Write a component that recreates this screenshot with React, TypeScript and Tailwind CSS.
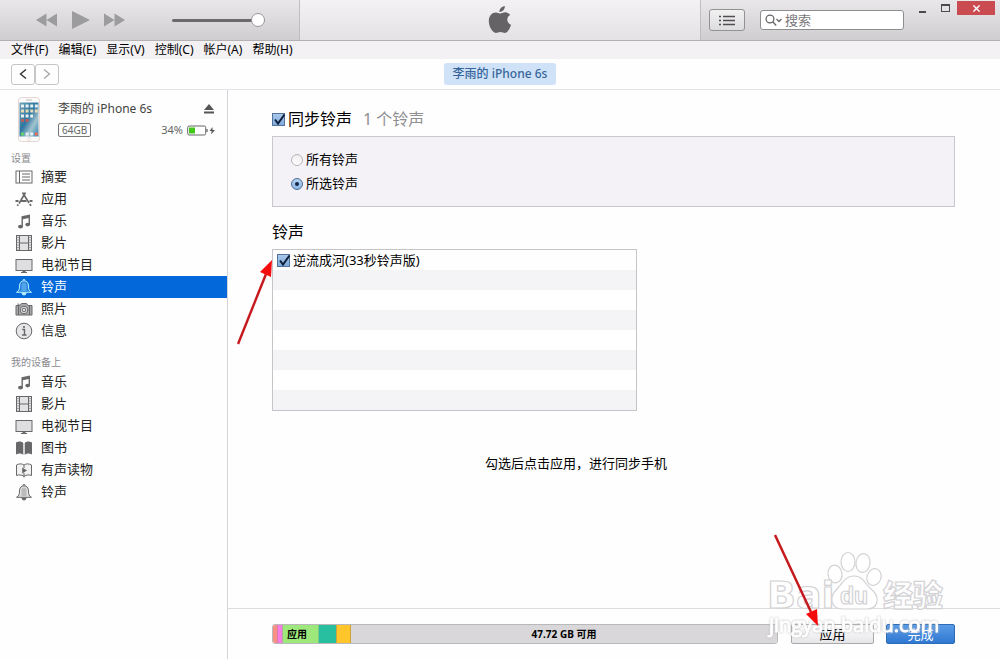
import type { ReactNode } from "react";

type IconName =
  | "summary"
  | "apps"
  | "music"
  | "film"
  | "tv"
  | "bell"
  | "camera"
  | "info"
  | "book"
  | "audiobook";

const icons: Record<IconName, ReactNode> = {
  summary: (
    <>
      <rect x="1" y="3" width="16" height="12" fill="#fff" />
      <path d="M4.5 3v12M7 6h8M7 9h8M7 12h8" />
    </>
  ),
  apps: (
    <>
      <path d="M7.500 2.500L14 13M10.500 2.500L4 13.500" strokeWidth="1.600" />
      <path d="M.5 11h3M6 11h5.500M14.500 11h3" strokeWidth="1.800" />
      <path d="M3.200 14.500l-.9 1.200M14.800 14l1.200 1.800" strokeWidth="1.800" />
    </>
  ),
  music: (
    <>
      <path d="M6.500 4.200L15 2.500v9.800h-1.400V6L7.900 7.200v7.300H6.500z" fill="currentColor" stroke="none" />
      <ellipse cx="5.500" cy="14.600" rx="2.500" ry="1.900" fill="currentColor" stroke="none" />
      <ellipse cx="12.700" cy="12.600" rx="2.400" ry="1.800" fill="currentColor" stroke="none" />
    </>
  ),
  film: (
    <>
      <rect x="1.500" y="1.500" width="15" height="15" fill="#e2e2e4" />
      <path d="M4.500 1.500v15M13.500 1.500v15M4.500 9h9" />
      <path d="M3 3v13M15 3v13" strokeDasharray="1 1.500" />
    </>
  ),
  tv: (
    <>
      <rect x="1" y="3.500" width="16" height="11" fill="#dedee0" />
      <path d="M6 16.500h6M7.500 15.500h3" />
    </>
  ),
  bell: (
    <>
      <path
        d="M1.500 14.300c2.500-1.300 3-2.800 3-6.300C4.500 4.800 6.300 2.800 9 2.800s4.500 2 4.500 5.200c0 3.500.5 5 3 6.300z"
        fill="currentColor"
        fillOpacity=".2"
      />
      <path d="M6.500 7c0-1.500 1-2.500 2.500-2.500S11.500 5.500 11.500 7v6h-5z" fill="currentColor" fillOpacity=".3" stroke="none" />
      <path d="M8 2.500a1 1.200 0 0 1 2 0" />
      <path d="M7 15h4a2 2 0 0 1-4 0z" fill="currentColor" />
    </>
  ),
  camera: (
    <>
      <path d="M1 5.500h4l1.500-2h5l1.500 2h4V15H1z" fill="#a9a9ac" />
      <circle cx="9" cy="10" r="3.800" fill="#e4e4e6" />
      <circle cx="9" cy="10" r="1.800" />
      <path d="M2.500 4.200h2M3.500 6v9M14.500 6v9" />
    </>
  ),
  info: (
    <>
      <circle cx="9" cy="9" r="7.800" fill="#e6e6e8" />
      <path d="M7.200 7.500H9.500V13M7 13h4.500" strokeWidth="1.400" />
      <circle cx="9" cy="5" r="1.100" fill="currentColor" stroke="none" />
    </>
  ),
  book: (
    <path
      d="M1 3.500C3.500 2 6.500 2 8.300 4v12C6.500 14 3.500 14 1 15.500zM17 3.500C14.500 2 11.500 2 9.700 4v12c1.800-2 4.800-2 7.300-.5z"
      fill="currentColor"
      stroke="none"
    />
  ),
  audiobook: (
    <>
      <path
        d="M1.500 4C4 2.500 7 2.500 9 4c2-1.500 5-1.500 7.500 0v10.500c-2-.9-5-.9-7.500.8-2.500-1.700-5.500-1.700-7.500-.8z"
        fill="#f2f2f3"
      />
      <path d="M9 4v3M9 12v4.500" />
      <path d="M7.200 6.500l4.800 3-4.800 3z" fill="currentColor" stroke="none" />
    </>
  ),
};

const menus = ["文件(F)", "编辑(E)", "显示(V)", "控制(C)", "帐户(A)", "帮助(H)"];

const settings: { label: string; icon: IconName }[] = [
  { label: "摘要", icon: "summary" },
  { label: "应用", icon: "apps" },
  { label: "音乐", icon: "music" },
  { label: "影片", icon: "film" },
  { label: "电视节目", icon: "tv" },
  { label: "铃声", icon: "bell" },
  { label: "照片", icon: "camera" },
  { label: "信息", icon: "info" },
];

const onDevice: { label: string; icon: IconName }[] = [
  { label: "音乐", icon: "music" },
  { label: "影片", icon: "film" },
  { label: "电视节目", icon: "tv" },
  { label: "图书", icon: "book" },
  { label: "有声读物", icon: "audiobook" },
  { label: "铃声", icon: "bell" },
];

function SideItem({ label, icon, active }: { label: string; icon: IconName; active?: boolean }) {
  return (
    <li>
      <a
        href="#"
        className={`flex h-[22px] items-center gap-2 pl-[15px] text-[13px] ${
          active ? "bg-[#0368d9] text-white" : "text-[#222]"
        }`}
      >
        <svg
          viewBox="0 0 18 18"
          className={`size-[18px] ${active ? "text-[#b8f0ff]" : "text-[#68686b]"}`}
          fill="none"
          stroke="currentColor"
          strokeWidth="1"
        >
          {icons[icon]}
        </svg>
        {label}
      </a>
    </li>
  );
}

function Check({ id }: { id: string }) {
  return (
    <span className="relative flex size-[13px] shrink-0">
      <input
        id={id}
        type="checkbox"
        defaultChecked
        className="size-[13px] appearance-none border border-[#53739b] bg-linear-to-b from-[#a9c8ea] to-[#7faadb]"
      />
      <svg
        viewBox="0 0 14 14"
        className="pointer-events-none absolute inset-0 size-[14px]"
        fill="none"
        stroke="#10203a"
        strokeWidth="2"
      >
        <path d="M3 6.500l3 4L12.500 1.500" />
      </svg>
    </span>
  );
}

function Radio({ id, label, checked }: { id: string; label: string; checked?: boolean }) {
  return (
    <div className="flex h-5 items-center gap-[3px]">
      <span className="relative flex size-3">
        <input
          id={id}
          type="radio"
          name="ringtones"
          defaultChecked={checked}
          className="size-3 appearance-none rounded-full border border-[#b5b5b8] bg-linear-to-b from-[#eee] to-white checked:border-[#4c6f9c] checked:from-[#b5d1ef] checked:to-[#8fb7e4]"
        />
        {checked && (
          <span className="pointer-events-none absolute inset-1 rounded-full bg-[#10284c]" />
        )}
      </span>
      <label htmlFor={id} className="text-[13px]">
        {label}
      </label>
    </div>
  );
}

function Toolbar() {
  return (
    <header className="grid h-[41px] grid-cols-[3fr_4fr_3fr] border-b border-[#b3b1b4] bg-linear-to-b from-[#e9e7e9] to-[#cfcdd0]">
      <div className="flex items-center border-r border-[#bfbdc0] pl-9">
        <button aria-label="Previous" className="text-[#9c9b9d]">
          <svg viewBox="0 0 21 14" className="h-[14px] w-[21px]" fill="currentColor">
            <path d="M0 7L10.500 0.500v13zM10.500 7L21 0.500v13z" />
          </svg>
        </button>
        <button aria-label="Play" className="ml-[15px] text-[#9c9b9d]">
          <svg viewBox="0 0 18 18" className="size-[18px]" fill="currentColor">
            <path d="M0 0l18 9-18 9z" />
          </svg>
        </button>
        <button aria-label="Next" className="ml-[14px] text-[#9c9b9d]">
          <svg viewBox="0 0 21 14" className="h-[14px] w-[21px]" fill="currentColor">
            <path d="M0 .5L10.500 7 0 13.500zM10.500 .5L21 7l-10.500 6.500z" />
          </svg>
        </button>
        <input
          type="range"
          aria-label="Volume"
          defaultValue={100}
          className="ml-[47px] h-[3px] w-[93px] appearance-none rounded-full bg-[#6b696c] [&::-webkit-slider-thumb]:size-[14px] [&::-webkit-slider-thumb]:appearance-none [&::-webkit-slider-thumb]:rounded-full [&::-webkit-slider-thumb]:border [&::-webkit-slider-thumb]:border-[#98979a] [&::-webkit-slider-thumb]:bg-white"
        />
      </div>
      <div className="flex items-center justify-center bg-linear-to-b from-[#f3f1f3] to-[#e4e2e5]">
        <svg viewBox="0 0 24 28" className="h-7 w-6" fill="#656366">
          <path d="M16.800 0c.3 3-2.300 6-5.400 6C11 3.100 13.800.3 16.800 0z" />
          <path d="M12.200 7.600c1.300 0 2.700-1.300 5-1.300 1.800 0 3.700 1 4.900 2.600-4.200 2.400-3.500 8.300.9 10-.9 2.700-3.300 8-6.100 8-1.700 0-2.400-1-4.500-1s-2.900 1-4.500 1C4.600 26.900.8 20.600.8 15c0-5.500 3.400-8.600 6.900-8.600 2 0 3.300 1.200 4.500 1.200z" />
        </svg>
      </div>
      <div className="flex items-center border-l border-[#bfbdc0] pl-2">
        <button
          aria-label="List"
          className="flex h-[22px] w-9 items-center justify-center rounded-[3px] border border-[#929194] bg-linear-to-b from-[#f2f1f2] to-[#dddcde]"
        >
          <svg viewBox="0 0 16 11" className="h-[11px] w-4" stroke="#4f4e50" strokeWidth="1.500">
            <path d="M0 1.500h2M0 5.500h2M0 9.500h2M4 1.500h12M4 5.500h12M4 9.500h12" />
          </svg>
        </button>
        <div className="ml-[15px] flex h-5 w-36 items-center rounded-[3px] border border-[#8d8c8f] bg-white pl-1">
          <svg viewBox="0 0 18 12" className="h-3 w-[18px] shrink-0" fill="none" stroke="#666568" strokeWidth="1.300">
            <circle cx="5" cy="5" r="3.900" />
            <path d="M7.800 7.800l3.400 3.700M11.500 5l2.500 2.500L16.500 5" />
          </svg>
          <input
            type="text"
            aria-label="搜索"
            placeholder="搜索"
            className="ml-[2px] w-full min-w-0 text-[13px] leading-4 outline-none placeholder:text-[#79787b]"
          />
        </div>
        <div className="flex flex-1 justify-end self-start pt-px pr-[5px] text-[#4b4a4d]">
          <button aria-label="Minimize" className="flex w-[22px] items-center justify-center pt-2">
            <span className="h-[2px] w-[7px] bg-current" />
          </button>
          <button aria-label="Maximize" className="flex w-6 items-center justify-center">
            <span className="h-2 w-[9px] border border-t-2 border-current" />
          </button>
          <button
            aria-label="Close"
            className="flex h-[14px] w-[38px] items-center justify-center bg-[#cb4c50] text-white"
          >
            <svg viewBox="0 0 8 8" className="size-[7px]" stroke="currentColor" strokeWidth="1.600">
              <path d="M.5 .5l7 7M7.500 .5l-7 7" />
            </svg>
          </button>
        </div>
      </div>
    </header>
  );
}

function Sidebar() {
  return (
    <aside className="w-[228px] shrink-0 border-r border-[#d6d4d8]">
      <div className="flex pt-[7px] pl-[18px]">
        <svg viewBox="0 0 22 45" className="h-[45px] w-[22px]">
          <defs>
            <linearGradient id="wallpaper" x1="0" y1="0" x2="1" y2="1">
              <stop offset="0" stopColor="#6fa3b4" />
              <stop offset=".45" stopColor="#2f76a3" />
              <stop offset=".7" stopColor="#a3c3cc" />
              <stop offset="1" stopColor="#2b86b8" />
            </linearGradient>
          </defs>
          <rect x=".5" y=".5" width="21" height="44" rx="3" fill="#fafafa" stroke="#e6d5d0" />
          <path d="M8 3h6" stroke="#bbb" />
          <rect x="1.500" y="5.500" width="19" height="34" fill="url(#wallpaper)" />
          <path d="M3 9h17M3 19h12" stroke="#e8f1f2" strokeWidth="3" strokeDasharray="3 1.600" />
          <path d="M3 14h17" stroke="#e6dcb8" strokeWidth="3" strokeDasharray="3 1.600" />
          <path d="M3 23.500h8" stroke="#b9605a" strokeWidth="3" strokeDasharray="3 1.600" />
          <path d="M3 37h3" stroke="#5fd36e" strokeWidth="3" />
          <path d="M7.600 37h8" stroke="#e8f1f2" strokeWidth="3" strokeDasharray="3 1.600" />
          <path d="M16.800 37h3" stroke="#ee6a5a" strokeWidth="3" />
          <circle cx="11" cy="42" r="1.500" fill="#fff" stroke="#ddc9c4" strokeWidth=".6" />
        </svg>
        <div className="flex-1 pt-[2px] pr-3 pl-[18px]">
          <div className="flex h-5 items-center justify-between pr-px text-xs text-[#444]">
            <span>李雨的 iPhone 6s</span>
            <svg viewBox="0 0 10 10" className="size-[10px]" fill="#555">
              <path d="M5 0l5 6H0zM0 7.500h10V9.500H0z" />
            </svg>
          </div>
          <div className="mt-px flex h-5 items-center justify-between text-[11px] text-[#666]">
            <span className="rounded-[2px] border border-[#777] px-[3px] text-[10px] leading-3">64GB</span>
            <span className="flex items-center gap-1">
              34%
              <svg viewBox="0 0 28 11" className="h-[11px] w-7">
                <rect x=".7" y="1" width="18" height="9" rx="1.500" fill="#fff" stroke="#666" />
                <rect x="2" y="2.500" width="6" height="6" fill="#42c81c" />
                <path d="M20 4v3" stroke="#666" strokeWidth="1.300" />
                <path d="M25.500 2L22.500 6h2.200l-.7 3.500L28 5h-2.500z" fill="#555" />
              </svg>
            </span>
          </div>
        </div>
      </div>
      <h3 className="mt-2 h-4 pl-[11px] text-[10px] leading-4 text-[#8b8a90]">设置</h3>
      <ul>
        {settings.map((item) => (
          <SideItem key={item.label} {...item} active={item.icon === "bell"} />
        ))}
      </ul>
      <h3 className="mt-3 h-[17px] pl-[11px] text-[10px] leading-4 text-[#8b8a90]">我的设备上</h3>
      <ul>
        {onDevice.map((item) => (
          <SideItem key={item.label} {...item} />
        ))}
      </ul>
    </aside>
  );
}

function Watermark() {
  return (
    <svg
      viewBox="0 0 186 90"
      className="pointer-events-none absolute right-[50px] bottom-[18px] h-[90px] w-[186px]"
      fill="#fff"
      fillOpacity=".8"
      stroke="#d3d2d5"
      strokeWidth="1.200"
    >
      <ellipse cx="71" cy="23" rx="7" ry="9" transform="rotate(-8 71 23)" />
      <ellipse cx="84" cy="11" rx="7" ry="9.500" />
      <ellipse cx="99" cy="12" rx="7" ry="9.500" transform="rotate(8 99 12)" />
      <ellipse cx="110" cy="26" rx="7" ry="8.500" transform="rotate(20 110 26)" />
      <path d="M90 25c9 0 11 8 17 13 10 8 7 20-4 20H79c-12 0-15-11-6-20 6-6 8-13 17-13z" />
      <text x="3" y="57" fontSize="38" fontWeight="700" fontFamily="DejaVu Sans">
        Bai
      </text>
      <text x="76" y="53" fontSize="23" fontWeight="700" fontFamily="Liberation Sans">
        du
      </text>
      <text x="119" y="55" fontSize="30" fontWeight="900" fontFamily="Noto Sans CJK SC">
        经验
      </text>
      <text
        x="5"
        y="81"
        fontSize="20"
        fontFamily="Open Sans"
        fillOpacity="1"
        stroke="#fff"
        strokeWidth=".8"
        className="drop-shadow-[0_0_1px_#bbb]"
      >
        jingyan.baidu.com
      </text>
    </svg>
  );
}

export default function App() {
  return (
    <div className="flex min-h-screen flex-col bg-[#fefefe] font-['Noto_Sans','Noto_Sans_CJK_SC',sans-serif] text-black">
      <Toolbar />

      <nav className="flex h-[18px] items-center gap-[10px] bg-[#f3f1f4] pl-[11px] text-xs">
        {menus.map((menu) => (
          <button key={menu} className="leading-4">
            {menu}
          </button>
        ))}
      </nav>

      <div className="grid h-[31px] grid-cols-[1fr_auto_1fr] items-center border-b border-[#e4e2e6]">
        <div className="flex pl-[11px]">
          <button
            aria-label="Back"
            className="flex h-[21px] w-6 items-center justify-center rounded-[3px] border border-[#c6c5c8]"
          >
            <svg viewBox="0 0 8 10" className="h-[10px] w-2" fill="none" stroke="#333" strokeWidth="1.400">
              <path d="M7 .5L1.500 5 7 9.500" />
            </svg>
          </button>
          <button
            aria-label="Forward"
            className="flex h-[21px] w-6 items-center justify-center rounded-[3px] border border-[#c6c5c8]"
          >
            <svg viewBox="0 0 8 10" className="h-[10px] w-2" fill="none" stroke="#a5a4a7" strokeWidth="1.300">
              <path d="M1 .5L6.500 5 1 9.500" />
            </svg>
          </button>
        </div>
        <button className="h-[22px] rounded-[3px] bg-[#cfe2f7] px-[9px] text-xs font-medium text-[#37659a]">
          李雨的 iPhone 6s
        </button>
      </div>

      <div className="flex flex-1">
        <Sidebar />

        <div className="flex min-w-0 flex-1 flex-col">
          <main className="flex-1 pt-[19px] pr-[45px] pl-11">
            <div className="flex h-5 items-center text-base">
              <Check id="sync" />
              <label htmlFor="sync" className="ml-[3px]">
                同步铃声
              </label>
              <span className="ml-[11px] text-[#8f8e91]">1 个铃声</span>
            </div>

            <div className="mt-[7px] flex flex-col gap-1 border border-[#c9c6cc] bg-[#f4f2f6] pt-[13px] pb-3 pl-[18px]">
              <Radio id="all" label="所有铃声" />
              <Radio id="selected" label="所选铃声" checked />
            </div>

            <h2 className="mt-[15px] h-5 text-base leading-5">铃声</h2>

            <div className="relative mt-[7px] w-[365px]">
              <ul className="border border-[#c6c4c9]">
                <li className="flex h-5 items-center gap-[3px] pl-1">
                  <Check id="song" />
                  <label htmlFor="song" className="text-[13px] leading-5">
                    逆流成河(33秒铃声版)
                  </label>
                </li>
                {Array.from({ length: 7 }, (_, i) => (
                  <li key={i} className="h-5 odd:bg-white even:bg-[#f4f3f6]" />
                ))}
              </ul>
              <svg viewBox="0 0 36 86" className="pointer-events-none absolute top-[11px] -left-[35px] h-[86px] w-9">
                <path d="M1 84L29 14" stroke="#c5191d" strokeWidth="2.500" />
                <path d="M35 0L34 17 23 12z" fill="#f40c0c" />
              </svg>
            </div>

            <p className="mt-[42px] pl-[213px] text-[13px] leading-5">勾选后点击应用，进行同步手机</p>
          </main>

          <footer className="relative flex h-[51px] items-start border-t border-[#dddce0] pt-[15px] pr-[45px] pl-11">
            <div className="flex h-5 flex-1 overflow-hidden rounded-[3px] border border-[#b9b8bb] text-[10px] leading-[18px] font-bold">
              <span className="w-1 bg-[#f78f84]" />
              <span className="w-[5px] border-l border-[#dd7bb5] bg-[#f57fe0]" />
              <span className="w-9 border-l border-[#b4a4a0] bg-[#9ee87b] pl-1">应用</span>
              <span className="w-[18px] border-l border-[#7fc983] bg-[#27bfa0]" />
              <span className="w-[15px] border-x border-[#c9a33e] bg-[#ffc52a]" />
              <span className="flex-1 bg-[#d9d7da] text-center">47.72 GB 可用</span>
            </div>
            <button className="ml-[13px] h-5 w-[83px] rounded-[2px] border border-[#a9a8ab] bg-linear-to-b from-white to-[#e6e5e8] text-[13px] leading-[18px]">
              应用
            </button>
            <button className="ml-3 h-5 w-[69px] rounded-[2px] border border-[#2e6bb5] bg-linear-to-b from-[#5a9be6] to-[#2f78d2] text-[13px] leading-[18px] text-white">
              完成
            </button>
            <Watermark />
            <svg
              viewBox="0 0 46 92"
              className="pointer-events-none absolute right-[181px] bottom-[33px] h-[92px] w-[46px]"
            >
              <path d="M2 1L38 78" stroke="#c5191d" strokeWidth="2.500" />
              <path d="M45 92L33 80 44 75z" fill="#f40c0c" />
            </svg>
          </footer>
        </div>
      </div>
    </div>
  );
}
